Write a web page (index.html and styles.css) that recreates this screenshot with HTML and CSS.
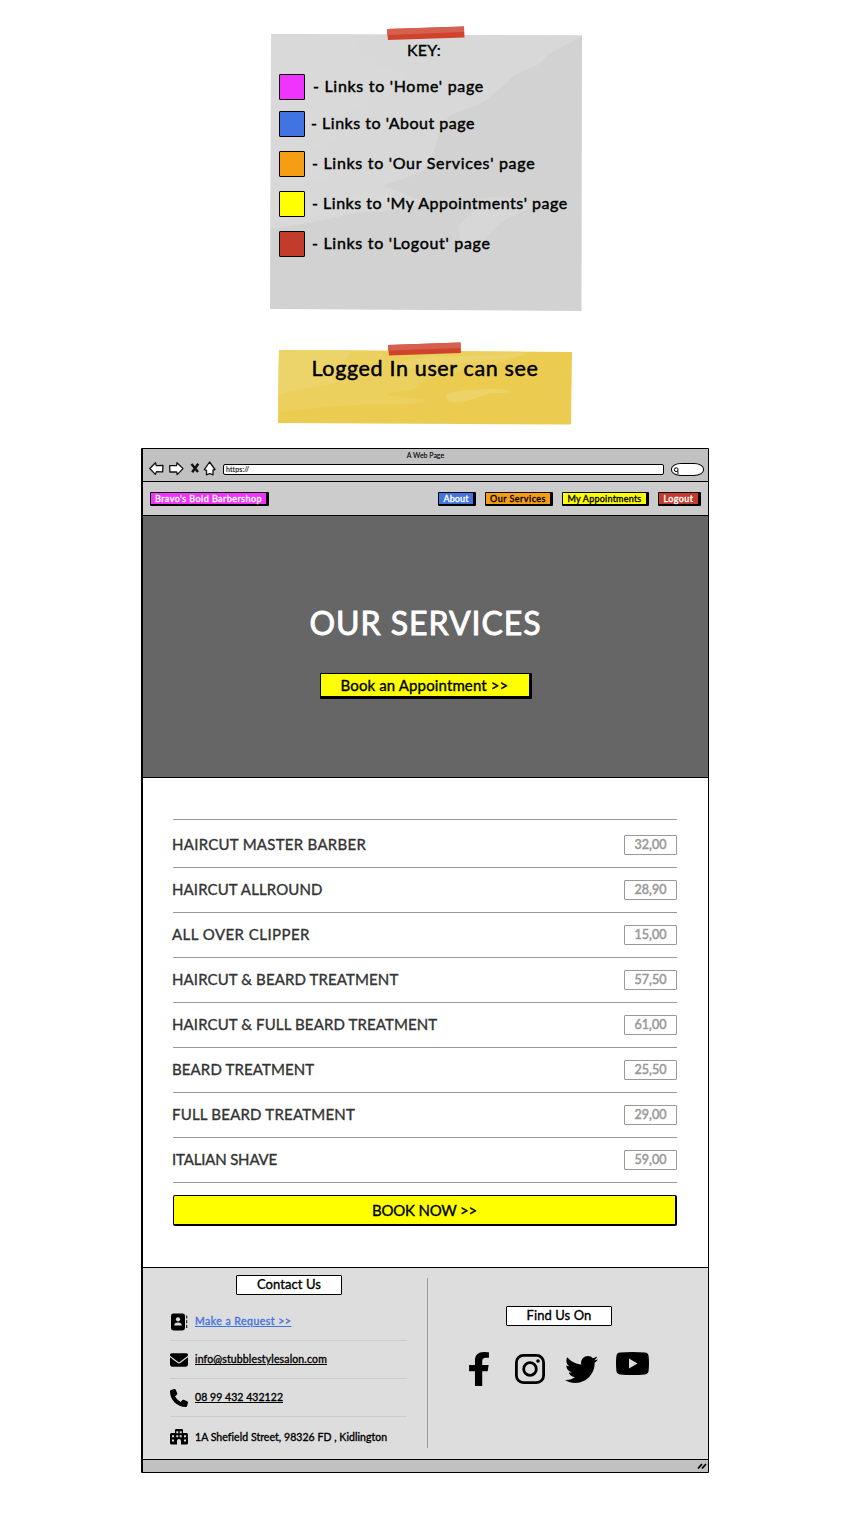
FILE: index.html
```
<!DOCTYPE html>
<html lang="en">
<head>
<meta charset="utf-8">
<title>Our Services</title>
<link rel="stylesheet" href="styles.css">
</head>
<body>
<main class="board">
  <section class="note key">
    <svg class="paper" viewBox="0 0 312 286" aria-hidden="true">
      <path fill="#d2d2d2" d="M1 8 312 9.500 311.500 285 0 283Z"/>
      <path fill="#d8d8d8" d="M1 8 312 9.500C294 22 278 26 274 33C266 44 247 43 237 57C220 70 216 75 208 79C186 87 180 87 176 95C163 114 167 130 155 142C143 153 124 153 115 160C132 168 145 172 156 176C136 187 98 184 78 188C52 196 20 200 1 203Z"/>
      <path fill="#dcdcdc" d="M1 8H83L91 30C106 40 119 43 133 50L132 61C109 61 93 67 98 78L66 91 65 112 38 128 60 152 1 157ZM1 182C43 178 65 172 105 167L156 176C110 176 96 187 1 195Z" opacity=".4"/>
      <path fill="#d7d7d7" d="M205 173C226 169 261 172 267 180C241 189 233 193 214 214C207 231 187 229 189 200C194 190 210 189 205 173Z"/>
      <path fill="#cf432d" d="M117 3 194 .5 194.500 11.500 118 14Z"/>
      <path fill="#d6604f" d="M117 3 194 .5V6L117 9Z"/>
    </svg>
    <h2 class="t-key">KEY:</h2>
    <ul class="legend">
      <li><i class="sw home"></i><span>- Links to 'Home' page</span></li>
      <li><i class="sw about"></i><span>- Links to 'About page</span></li>
      <li><i class="sw serv"></i><span>- Links to 'Our Services' page</span></li>
      <li><i class="sw appt"></i><span>- Links to 'My Appointments' page</span></li>
      <li><i class="sw logout"></i><span>- Links to 'Logout' page</span></li>
    </ul>
  </section>

  <section class="note sticky">
    <svg class="paper" viewBox="0 0 294 83" aria-hidden="true">
      <path fill="#ebcc51" d="M1 8 294 10 293 82.500 0 81Z"/>
      <path fill="#ecd05e" d="M1 8 250 10C220 25 205 22 190 27C160 36 155 31 143 42C138 51 112 49 108 53C125 55 140 56 148 59C130 65 90 61 60 64L0 70Z"/>
      <path fill="#efd774" d="M1 8H75L65 20C96 24 80 40 45 43L0 52ZM108 24 150 14C170 16 220 12 250 12 215 21 150 20 130 28Z" opacity=".55"/>
      <path fill="#edd26a" d="M168 52C185 45 230 48 201 55C175 64 166 60 168 52ZM194 48C215 46 230 47 233 50C220 52 205 51 194 48Z"/>
      <path fill="#cf432d" d="M110 3 182.500 .5 183 11 111 13.500Z"/>
      <path fill="#d6604f" d="M110 3 182.500 .5V6L110 8.500Z"/>
    </svg>
    <h2 class="t-see">Logged In user can see</h2>
  </section>

  <section class="browser">
    <header class="chrome">
      <div class="title">A Web Page</div>
      <div class="tools">
        <svg class="nav-icons" viewBox="0 0 68 16" aria-hidden="true">
          <g fill="#fff" stroke="#111" stroke-width="1.300" stroke-linejoin="round">
            <path d="M.8 7.500 6.500 1.700 7.200 4.600 14 4.400 13.600 10.900 7.500 10.700 6.300 13.400Z"/>
            <path d="M34 7.600 28 1.700 27.600 4.500 20.700 4.700 20.900 11 27.600 10.900 28.200 13.600Z"/>
            <path d="M60.600 1 66 8.500 64 9 64 13.800 60.800 12.500 57.500 13.800 57.500 9.400 55.300 8.600Z"/>
          </g>
          <path d="M42.500 3 49 11M49.300 2.700 43.200 11.200" stroke="#111" stroke-width="2.500"/>
        </svg>
        <div class="url">https://</div>
        <div class="search"><svg viewBox="0 0 8 8"><circle cx="4.200" cy="3.200" r="1.900"/><path d="M5.800 4.500 6 7.500"/></svg></div>
      </div>
    </header>

    <nav class="nav">
      <a class="tag home">Bravo's Bold Barbershop</a>
      <div class="menu">
        <a class="tag about">About</a>
        <a class="tag serv">Our Services</a>
        <a class="tag appt">My Appointments</a>
        <a class="tag logout">Logout</a>
      </div>
    </nav>

    <section class="hero">
      <h1>OUR SERVICES</h1>
      <a class="btn">Book an Appointment &gt;&gt;</a>
    </section>

    <section class="services">
      <ul class="list">
        <li><span>HAIRCUT MASTER BARBER</span><b>32,00</b></li>
        <li><span>HAIRCUT ALLROUND</span><b>28,90</b></li>
        <li><span>ALL OVER CLIPPER</span><b>15,00</b></li>
        <li><span>HAIRCUT &amp; BEARD TREATMENT</span><b>57,50</b></li>
        <li><span>HAIRCUT &amp; FULL BEARD TREATMENT</span><b>61,00</b></li>
        <li><span>BEARD TREATMENT</span><b>25,50</b></li>
        <li><span>FULL BEARD TREATMENT</span><b>29,00</b></li>
        <li><span>ITALIAN SHAVE</span><b>59,00</b></li>
      </ul>
      <a class="book">BOOK NOW &gt;&gt;</a>
    </section>

    <footer class="foot">
      <div class="contact">
        <h3 class="cap">Contact Us</h3>
        <ul>
          <li>
            <svg class="ic" viewBox="0 0 18 18"><rect x="1" y=".5" width="14" height="17" rx="2.400"/><path d="M16.200 2.500h1v3h-1zM16.200 7.300h1v3h-1zM16.200 12h1v3h-1z"/><circle cx="8" cy="6.300" r="2.100" fill="#ddd"/><path fill="#ddd" d="M4.200 12.600C4.200 10.300 5.500 9.400 8 9.400s3.800.9 3.800 3.200z"/></svg>
            <a class="req">Make a Request &gt;&gt;</a></li>
          <li>
            <svg class="ic" viewBox="0 0 512 512"><path d="M48 64C21.500 64 0 85.500 0 112c0 15.100 7.100 29.300 19.200 38.400L236.800 313.600c11.400 8.500 27 8.500 38.400 0L492.800 150.400c12.100-9.100 19.200-23.300 19.200-38.400c0-26.500-21.500-48-48-48H48zM0 176V384c0 35.300 28.700 64 64 64H448c35.300 0 64-28.700 64-64V176L294.400 339.200c-22.800 17.100-54 17.100-76.800 0L0 176z"/></svg>
            <a class="mail">info@stubblestylesalon.com</a></li>
          <li>
            <svg class="ic" viewBox="0 0 512 512"><path d="M164.900 24.600c-7.700-18.600-28-28.500-47.400-23.200l-88 24C12.100 30.200 0 46 0 64C0 311.400 200.600 512 448 512c18 0 33.800-12.100 38.600-29.500l24-88c5.300-19.400-4.600-39.700-23.200-47.400l-96-40c-16.300-6.800-35.200-2.100-46.300 11.600L304.700 368C234.300 334.700 177.300 277.700 144 207.300L193.300 167c13.700-11.200 18.400-30 11.600-46.300l-40-96z"/></svg>
            <a class="tel">08 99 432 432122</a></li>
          <li>
            <svg class="ic" viewBox="0 0 18 18"><path fill-rule="evenodd" d="M6 1h6q1 0 1 1V5h3.500q1.500 0 1.500 1.500V15q0 1.500-1.500 1.500H11V13q0-2-2-2t-2 2v3.500H1.500Q0 16.500 0 15V6.500Q0 5 1.500 5H5V2q0-1 1-1zM6.300 3.200v2h2v-2zM9.700 3.200v2h2v-2zM6.300 7.300v2h2v-2zM9.700 7.300v2h2v-2zM2 7.300v2h2v-2zM2 11.600v2h2v-2zM14 7.300v2h2v-2zM14 11.600v2h2v-2z"/></svg>
            <span>1A Shefield Street, 98326 FD , Kidlington</span></li>
        </ul>
      </div>
      <div class="social">
        <h3 class="cap">Find Us On</h3>
        <div class="icons">
          <svg class="fb" viewBox="22 0 276 512" preserveAspectRatio="none"><path d="M279.140 288l14.220-92.660h-88.910v-60.130c0-25.350 12.420-50.060 52.240-50.060h40.420V6.260S260.430 0 225.360 0c-73.220 0-121.080 44.380-121.080 124.720v70.620H22.890V288h81.390v224h100.170V288z"/></svg>
          <svg class="ig" viewBox="0 0 30 30"><rect x="1.400" y="1.400" width="27.200" height="27.200" rx="7" fill="none" stroke="#000" stroke-width="2.800"/><circle cx="15" cy="15" r="6.300" fill="none" stroke="#000" stroke-width="2.800"/><circle cx="23" cy="7" r="1.800"/></svg>
          <svg class="tw" viewBox="0 48 512 416" preserveAspectRatio="none"><path d="M459.370 151.716c.325 4.548.325 9.097.325 13.645 0 138.720-105.583 298.558-298.558 298.558-59.452 0-114.680-17.219-161.137-47.106 8.447.974 16.568 1.299 25.340 1.299 49.055 0 94.213-16.568 130.274-44.832-46.132-.975-84.792-31.188-98.112-72.772 6.498.974 12.995 1.624 19.818 1.624 9.421 0 18.843-1.300 27.614-3.573-48.081-9.747-84.143-51.980-84.143-102.985v-1.299c13.969 7.797 30.214 12.670 47.431 13.319-28.264-18.843-46.781-51.005-46.781-87.391 0-19.492 5.197-37.360 14.294-52.954 51.655 63.675 129.300 105.258 216.365 109.807-1.624-7.797-2.599-15.918-2.599-24.040 0-57.828 46.782-104.934 104.934-104.934 30.213 0 57.502 12.670 76.670 33.137 23.715-4.548 46.456-13.320 66.599-25.340-7.798 24.366-24.366 44.833-46.132 57.827 21.117-2.273 41.584-8.122 60.426-16.243-14.292 20.791-32.161 39.308-52.628 54.253z"/></svg>
          <svg class="yt" viewBox="0 0 33 23"><path fill-rule="evenodd" d="M4 .6Q16.500-.5 29 .6 32.200 1 32.600 4 33.400 11.500 32.600 19 32.200 22 29 22.400 16.500 23.500 4 22.400.8 22 .4 19-.4 11.500.4 4 .8 1 4 .6ZM13 6.600v9.800l8.500-4.900z"/></svg>
        </div>
      </div>
    </footer>
    <div class="status"><svg viewBox="0 0 10 8"><path d="M1 6.500 5 2M5 6.500 9 2"/></svg></div>
  </section>
</main>
</body>
</html>
```
FILE: styles.css
```
* { box-sizing: border-box; }
body { margin: 0; background: #fff; color: #000; font-family: Lato, "Noto Sans", sans-serif; -webkit-text-stroke: .35px currentColor; }
h1, h2, h3, ul { margin: 0; padding: 0; font-weight: 400; }
ul { list-style: none; }
b, i { font-style: normal; font-weight: inherit; }
svg { display: block; }
.board { position: relative; width: 844px; height: 1516px; padding-top: 26px; }

.home { background: #f033ff; }
.about { background: #4273e3; }
.serv { background: #f59e13; }
.appt { background: #ff0; }
.logout { background: #c23b2b; }

/* taped paper notes */
.note { position: relative; }
.paper { position: absolute; inset: 0; width: 100%; height: 100%; z-index: -1; }
.key { width: 312px; height: 286px; margin-left: 270px; padding: 14px 0 0 9px; }
.t-key { font-size: 16px; line-height: 20px; text-align: center; margin-right: 13px; letter-spacing: .25px; }
.legend { display: flex; flex-direction: column; padding-top: 14px; font-size: 16px; -webkit-text-stroke-width: .45px; }
.legend li { display: flex; align-items: center; gap: 8px; height: 26px; margin-bottom: 11px; line-height: 24px; white-space: nowrap; letter-spacing: .7px; }
.legend li span { padding-bottom: 2px; }
.legend li:nth-child(n+2) { margin-bottom: 14px; gap: 7px; }
.legend li:nth-child(2) { gap: 6px; letter-spacing: .52px; }
.legend li:nth-child(4) { letter-spacing: .52px; }
.sw { width: 26px; height: 26px; border: 1px solid #000; border-radius: 1px; }
.sticky { width: 294px; height: 83px; margin: 30px 0 0 278px; padding-top: 12px; text-align: center; }
.t-see { font-size: 21.500px; line-height: 28px; letter-spacing: .65px; -webkit-text-stroke-width: .5px; }

/* browser window */
.browser { width: 568px; height: 1025px; margin: 23px 0 0 141px; border: 1px solid #000; border-left-width: 2px; border-radius: 1px; display: flex; flex-direction: column; background: #fff; }
.chrome { height: 33px; background: #c1c1c1; border-bottom: 1px solid #000; }
.title { font-size: 7px; line-height: 9px; padding-top: 2px; text-align: center; -webkit-text-stroke-width: .1px; }
.tools { display: flex; align-items: center; padding-left: 6px; height: 18px; }
.nav-icons { width: 68px; height: 16px; margin-right: 6px; }
.url { width: 441px; height: 11px; border: 1px solid #000; border-radius: 2px; background: #fff; font-size: 7px; line-height: 9px; letter-spacing: .11px; padding-left: 2px; margin-right: 7px; -webkit-text-stroke-width: .1px; }
.search { width: 33px; height: 13px; border: 1px solid #000; border-radius: 10px / 6px; background: #fff; }
.search svg { width: 8px; height: 9px; margin-top: 2px; fill: none; stroke: #000; }

.nav { display: flex; justify-content: space-between; align-items: center; height: 34px; padding: 0 7px; background: #ccc; border-bottom: 1px solid #000; }
.menu { display: flex; gap: 9px; }
.tag { height: 14px; border: 1px solid #000; border-width: 1px 3px 2px 1px; border-radius: 1px; font-size: 9px; line-height: 12px; text-align: center; white-space: nowrap; }
.tag.home, .tag.about, .tag.logout { color: #fff; }
.tag.home { width: 119px; letter-spacing: .45px; }
.tag.about { width: 38px; letter-spacing: .12px; }
.tag.serv { width: 68px; letter-spacing: .49px; }
.tag.appt { width: 87px; letter-spacing: .23px; }
.tag.logout { width: 43px; letter-spacing: .44px; }

.hero { height: 262px; background: #666; border-bottom: 1px solid #000; display: flex; flex-direction: column; align-items: center; padding-top: 86px; }
.hero h1 { color: #fff; font-size: 32px; line-height: 42px; letter-spacing: .96px; -webkit-text-stroke-width: .9px; }
.btn { width: 212px; height: 26px; margin: 29px 0 0; background: #ff0; border: 1px solid #000; border-width: 1px 3px 3px 1px; border-radius: 1px; text-align: center; font-size: 15px; line-height: 23px; letter-spacing: .13px; }

.services { height: 490px; padding: 41px 31px 0 30px; border-bottom: 1px solid #000; }
.list { border-top: 1px solid #999; padding-top: 3px; }
.list li { display: flex; align-items: center; justify-content: space-between; height: 45px; border-bottom: 1px solid #999; font-size: 15px; letter-spacing: .12px; color: #333; }
.list span { margin: -3px 0 0 -1px; }
.list li:nth-child(1) { letter-spacing: .28px; }
.list li:nth-child(3) { letter-spacing: .45px; }
.list li:nth-child(7) { letter-spacing: .21px; }
.list li:nth-child(8) { letter-spacing: -.17px; }
.list b { width: 53px; height: 20px; border: 1px solid #999; border-radius: 1px; color: #999; text-align: center; font-size: 12.500px; line-height: 17px; letter-spacing: 0; -webkit-text-stroke-width: .5px; }
.book { display: block; height: 31px; margin-top: 12px; background: #ff0; border: 1px solid #000; border-width: 1px 2px 2px 1px; border-radius: 2px; text-align: center; font-size: 15px; line-height: 28px; letter-spacing: -.2px; }

.foot { height: 191px; background: #ddd; display: flex; }
.cap { width: 106px; height: 20px; border: 1px solid #000; border-radius: 1px; background: #fff; font-size: 13px; line-height: 17px; letter-spacing: .08px; text-align: center; }
.contact { width: 285px; padding: 7px 0 0 27px; position: relative; }
.contact::after { content: ""; position: absolute; right: 0; top: 10px; width: 1px; height: 170px; background: #999; }
.contact .cap { margin-left: 66px; }
.contact ul { padding-top: 8px; }
.contact li { display: flex; align-items: center; gap: 7px; height: 38px; width: 237px; border-bottom: 1px solid #ccc; font-size: 10.500px; letter-spacing: .05px; }
.contact li:last-child { border: 0; padding-top: 2px; }
.contact a { text-decoration: underline; margin-top: -1px; }
.contact .req { color: #4273e3; letter-spacing: .48px; }
.contact .mail { letter-spacing: .14px; }
.contact .tel { margin-top: -2px; }
.ic { width: 18px; height: 18px; }
.social { padding: 38px 0 0 78px; }
.icons { display: flex; align-items: flex-start; padding-top: 26px; margin-left: -37px; }
.fb { width: 20px; height: 34px; }
.ig { width: 30px; height: 30px; margin: 2px 0 0 26px; }
.tw { width: 33px; height: 27px; margin: 4px 0 0 20px; }
.yt { width: 33px; height: 23px; margin-left: 18px; }
.status { flex: 1; border-top: 1px solid #000; background: #c1c1c1; display: flex; justify-content: flex-end; align-items: center; padding-right: 1px; }
.status svg { width: 10px; height: 8px; stroke: #000; stroke-width: 1.800; }
```
